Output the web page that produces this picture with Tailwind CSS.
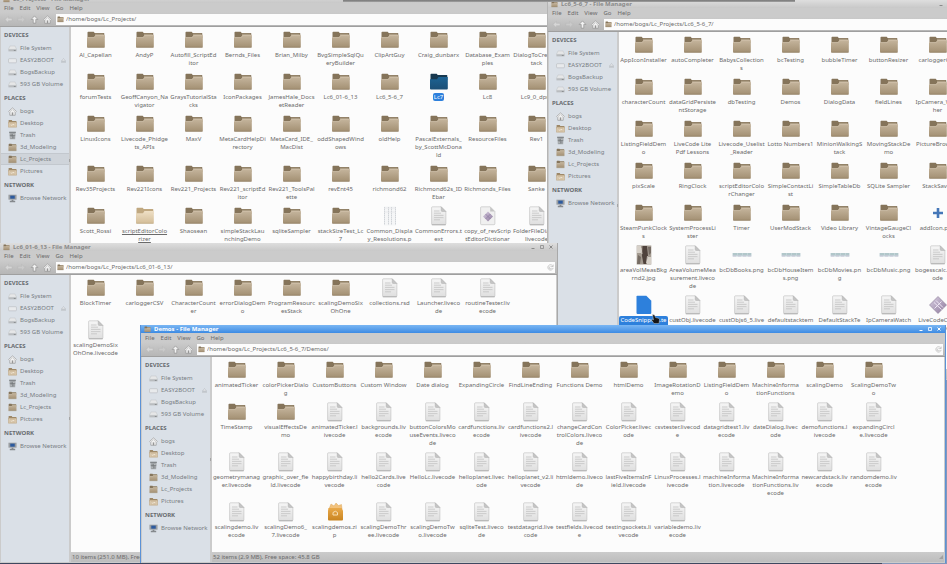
<!DOCTYPE html>
<html lang="en">
<head>
  <title>File Manager</title>
  <meta charset="UTF-8">
  <script src="https://cdn.jsdelivr.net/npm/@tailwindcss/browser@4"></script>
</head>
<body class="relative h-screen overflow-hidden bg-[#8496b8] font-['Noto_Sans',sans-serif] text-[6px] leading-[8px] text-[#6a6a6a]">

  <!-- icons -->
  <svg class="absolute size-0">
    <defs>
      <linearGradient id="gFolder" x1="0" y1="0" x2="0" y2="1"><stop offset="0" stop-color="#c5b59d"/><stop offset="1" stop-color="#a39073"/></linearGradient>
      <linearGradient id="gOpen" x1="0" y1="0" x2="0" y2="1"><stop offset="0" stop-color="#efe0c6"/><stop offset="1" stop-color="#d3bd98"/></linearGradient>
      <linearGradient id="gBlue" x1="0" y1="0" x2="0" y2="1"><stop offset="0" stop-color="#1d6394"/><stop offset="1" stop-color="#1c4f76"/></linearGradient>
      <linearGradient id="gDoc" x1="0" y1="0" x2="0" y2="1"><stop offset="0" stop-color="#f6f6f6"/><stop offset="1" stop-color="#dfdfdf"/></linearGradient>
      <linearGradient id="gZip" x1="0" y1="0" x2="0" y2="1"><stop offset="0" stop-color="#e9a94a"/><stop offset="1" stop-color="#c98420"/></linearGradient>
      <linearGradient id="gGem" x1="0" y1="0" x2="1" y2="1"><stop offset="0" stop-color="#d9cfe2"/><stop offset="1" stop-color="#8d7a9c"/></linearGradient>
    </defs>
    <symbol id="folder" viewBox="0 0 20 20">
      <path d="M1.500 2.500q0-.8.8-.8h5.400l1 1.300h9q.6 0 .6.600V8H1.500z" fill="#85745a"/>
      <path d="M9 3.600h8.600V5H9z" fill="#a8987f"/>
      <path d="M1 7.200h7L9.500 5h9.300v11.500q0 .9-.9.900H1.900q-.9 0-.9-.9z" fill="url(#gFolder)"/>
      <path d="M1 7.500h7.200L9.700 5.300h9.100" fill="none" stroke="#d8cbb7" stroke-width=".5"/>
      <path d="M1.300 17.300h17.300" stroke="#89775b" stroke-width=".6"/>
    </symbol>
    <symbol id="folderopen" viewBox="0 0 20 20">
      <path d="M1.500 2.500q0-.8.8-.8h5.400l1 1.300h9q.6 0 .6.600V8H1.500z" fill="#c0a880"/>
      <path d="M1 7.200h7L9.500 5h9.300v11.500q0 .9-.9.900H1.900q-.9 0-.9-.9z" fill="url(#gOpen)"/>
      <path d="M1.300 17.300h17.300" stroke="#b59d76" stroke-width=".6"/>
    </symbol>
    <symbol id="folderblue" viewBox="0 0 20 20">
      <path d="M1.500 2.500q0-.8.8-.8h5.400l1 1.300h9q.6 0 .6.600V8H1.500z" fill="#17384f"/>
      <path d="M1 7.200h7L9.500 5h9.300v11.500q0 .9-.9.900H1.900q-.9 0-.9-.9z" fill="url(#gBlue)"/>
    </symbol>
    <symbol id="doc" viewBox="0 0 20 20">
      <path d="M3.500.8h8.700l4.700 4.700v12.300q0 .9-.9.900H3.500q-.9 0-.9-.9V1.700q0-.9.900-.9z" fill="url(#gDoc)" stroke="#bdbdbd" stroke-width=".6"/>
      <path d="M2.800 18.800h14" stroke="#a2a2a2" stroke-width=".7"/>
      <path d="M12.200.8v3.800q0 .9.900.9h3.800z" fill="#c4c4c4" stroke="#a6a6a6" stroke-width=".4"/>
      <path d="M5 5h5.500M5 7.200h7M5 9.400h9.500M5 11.600h9.500M5 13.800h6" stroke="#c3c3c3" stroke-width=".8"/>
    </symbol>
    <symbol id="docblue" viewBox="0 0 20 20">
      <path d="M3.300.7h9l5 5v12.400q0 .8-.8.8H3.300q-.8 0-.8-.8V1.500q0-.8.8-.8z" fill="#2d80dc"/>
    </symbol>
    <symbol id="docgem" viewBox="0 0 20 20">
      <path d="M3.500.8h8.700l4.700 4.700v12.300q0 .9-.9.900H3.500q-.9 0-.9-.9V1.700q0-.9.900-.9z" fill="#f0f0f0" stroke="#bdbdbd" stroke-width=".6"/>
      <path d="M12.200.8v4.700h4.700z" fill="#c4c4c4"/>
      <path d="M10 5.500l5 5-5 5-5-5z" fill="url(#gGem)"/>
      <path d="M7.500 8l5 5M12.500 8l-5 5" stroke="#8d78a2" stroke-width=".7"/>
    </symbol>
    <symbol id="gem" viewBox="0 0 20 20">
      <path d="M10 1.500l8.500 8.500-8.500 8.500L1.500 10z" fill="url(#gGem)" stroke="#8b7a96" stroke-width=".6"/>
      <path d="M6 7.500l7.500 7M8 5.500l7 7M13.500 6.500l-7 7" stroke="#efe6f5" stroke-width="1"/>
    </symbol>
    <symbol id="sheet" viewBox="0 0 20 20">
      <path d="M4 .5h12v19H4z" fill="#f5f6f7"/>
      <path d="M4.500 1v18M8.500 1v18M11.500 1v18M15.500 1v18" stroke="#d0d4d8" stroke-width="1" stroke-dasharray="1.500 .5"/>
      <path d="M4 2h12M4 6h12" stroke="#dcdfe2" stroke-width=".5"/>
    </symbol>
    <symbol id="zip" viewBox="0 0 20 20">
      <path d="M4 7l2-5 3 2 2-3 2.500 2.500 3-1L17 7z" fill="#f2c27c" stroke="#d39b4a" stroke-width=".4"/>
      <path d="M3.500 6h13l1.500 2.500v9q0 1-1 1H4q-1 0-1-1v-9z" fill="url(#gZip)"/>
      <path d="M8 10.500q2.500-2.500 4.500 0M8 10.500v2.500h4.500v-2.500" fill="none" stroke="#f7dfb5" stroke-width="1"/>
    </symbol>
    <symbol id="plus" viewBox="0 0 20 20">
      <path d="M8.700 5h2.600v3.700H15v2.600h-3.700V15H8.700v-3.700H5V8.700h3.700z" fill="#4577b8"/>
    </symbol>
    <symbol id="photo" viewBox="0 0 20 20">
      <path d="M2.700.5h14.600v19H2.700z" fill="#a39a90"/>
      <path d="M3 1h4v7H3zM13 12h4v7h-4z" fill="#d6d0c8"/>
      <path d="M8.500 1h4.500l1 10-2 8H9.500L8 11z" fill="#4f423c"/>
      <path d="M4 10l3 2-1 7H3zM14 2h3v6l-2 2z" fill="#766c64"/>
      <path d="M7 3l1 6M13.500 11l-1 7" stroke="#e9e4dd" stroke-width=".7"/>
    </symbol>
    <symbol id="banner" viewBox="0 0 20 20">
      <path d="M.5 8h19v3.500H.5z" fill="#c3d3d8"/>
      <path d="M1 9h18" stroke="#8fb3b2" stroke-width=".7" stroke-dasharray="4 1"/>
      <path d="M1 11h18" stroke="#c0bad0" stroke-width=".7" stroke-dasharray="3 2"/>
    </symbol>

    <!-- small ones for the sidebar and the toolbar -->
    <symbol id="drive" viewBox="0 0 10 10">
      <path d="M2.200 2.200h5.600L9.500 6H.5z" fill="#e6e7e8" stroke="#b4b7ba" stroke-width=".4"/>
      <path d="M.5 6h9v2.200H.5z" fill="#b9bcbf"/>
      <path d="M6.500 7.200h2" stroke="#707376" stroke-width=".7"/>
    </symbol>
    <symbol id="usb" viewBox="0 0 10 10">
      <rect x=".6" y="3" width="8.800" height="4.600" rx="1" fill="#e8eaec" stroke="#b2b6ba" stroke-width=".6"/>
    </symbol>
    <symbol id="home" viewBox="0 0 10 10">
      <path d="M2 5v4.200h6V5L5 2.500z" fill="#f0f0f0" stroke="#8e8e8e" stroke-width=".7"/>
      <path d="M.9 5.500L5 1.700l4.100 3.800" fill="none" stroke="#f3f3f3" stroke-width="1.200"/>
      <path d="M.4 5.200L5 1l4.600 4.200" fill="none" stroke="#8e8e8e" stroke-width=".7"/>
      <path d="M4.200 6h1.600v3.200H4.200z" fill="#959595"/>
    </symbol>
    <symbol id="desk" viewBox="0 0 10 10">
      <path d="M.7 1.200h3.500l.6.900h4.500V5H.7z" fill="#9c8767"/>
      <path d="M.5 3.500h9v5.600h-9z" fill="#dccbb0" stroke="#b39a74" stroke-width=".5"/>
      <path d="M2.500 5h5v3h-5zM3.500 6l3 1.500" fill="#eee3d0" stroke="#b9a27e" stroke-width=".5"/>
    </symbol>
    <symbol id="trash" viewBox="0 0 10 10">
      <path d="M1.500 1.500h7L8 9.300H2z" fill="#a9adb0"/>
      <path d="M1.300.8h7.400v1.300H1.300z" fill="#7c8083"/>
      <path d="M3.500 3v5.500M5 3v5.500M6.500 3v5.500M2 5h6" stroke="#63676a" stroke-width=".5"/>
      <path d="M3 7h1M6 4h1" stroke="#e9ebec" stroke-width=".8"/>
    </symbol>
    <symbol id="net" viewBox="0 0 10 10">
      <path d="M.5.800h9v5.500h-9z" fill="#999da1"/>
      <path d="M2.500 1.800h5v3.400h-5z" fill="#2c5a9e"/>
      <path d="M4 6.300h2v1.200H4zM2 7.500h6v1.700H2z" fill="#85898d"/>
    </symbol>
    <symbol id="back" viewBox="0 0 10 10">
      <path d="M1 5l4-3.500v2.200h4v2.600H5v2.200z" fill="#d6d6d6" stroke="#b3b3b3" stroke-width=".5"/>
    </symbol>
    <symbol id="forward" viewBox="0 0 10 10">
      <path d="M9 5L5 1.500v2.200H1v2.600h4v2.200z" fill="#cacaca" stroke="#b8b8b8" stroke-width=".5"/>
    </symbol>
    <symbol id="up" viewBox="0 0 10 10">
      <path d="M5 1L1.300 5h2.300v4h2.800V5h2.300z" fill="#f2f2f2" stroke="#8e8e8e" stroke-width=".7"/>
    </symbol>
    <symbol id="reload" viewBox="0 0 10 10">
      <path d="M8 2.500A3.800 3.800 0 1 0 8.800 5.500M8.800.8v2.800H6M6.500 5.500A1.600 1.600 0 1 1 5 3.700" fill="none" stroke="#a3a3a3" stroke-width=".8"/>
    </symbol>
  </svg>

  <!-- Lc_Projects -->
  <section class="absolute -top-[5px] left-0 flex h-[300px] w-[564px] flex-col bg-[#cbcbcb]" data-window="projects"></section>

  <!-- Lc6_5-6_7 -->
  <section class="absolute top-0 -right-[18px] left-[547px] flex h-[380px] flex-col border-l border-[#b5b5b5] bg-[#cbcbcb]" data-window="lc65"></section>

  <!-- edge of the window above -->
  <div class="absolute top-0 left-[343px] h-[2px] w-[452px] bg-linear-to-b from-[#777777] to-[#a2a2a2]"></div>

  <!-- Lc6_01-6_13 -->
  <section class="absolute top-[243px] bottom-px left-0 flex w-[558px] flex-col border-r border-[#a9a9a9] bg-[#cbcbcb]" data-window="lc601"></section>

  <!-- Demos -->
  <section class="absolute top-[325px] right-px bottom-px left-[140px] flex flex-col border-x border-[#5c92d6] bg-[#cbcbcb]" data-window="demos"></section>

  <!-- panel edge -->
  <div class="absolute right-[65px] bottom-0 left-0 h-px bg-[#3e4860]"></div>

  <!-- pointer -->
  <svg class="absolute top-[314px] left-[651px] h-[10px] w-[9px]" viewBox="0 0 9 10">
    <path d="M1.500.5l2 .5 1 2.500 3 .8 1 1.200-.5 4H3L.5 6l1-.8 1 .6z" fill="#161616" stroke="#cfd8e4" stroke-width=".4"/>
  </svg>

<script>
  const windows = {
    projects: {
      title: "Lc_Projects - File Manager",
      path: "/home/bogs/Lc_Projects/",
      current: "Lc_Projects",
      cols: "grid-cols-[repeat(10,49px)]",
      status: "",
      files: `Al_Capellan, AndyP, Autofill_ScriptEd|itor, Bernds_Files, Brian_Milby, BvgSimpleSqlQu|eryBuilder, ClipArtGuy, Craig_dunbarx, Database_Exam|ples, DialogToCreateS|tack,
        forumTests, GeoffCanyon_Na|vigator, GraysTutorialSta|cks, IconPackages, JamesHale_Docs|etReader, Lc6_01-6_13, Lc6_5-6_7, Lc7:folderblue, Lc8, Lc9_0_dpr1,
        LinuxIcons, Livecode_Phidge|ts_APIs, MaxV, MetaCardHelpDi|rectory, MetaCard_IDE_|MacDist, oddShapedWind|ows, oldHelp, PascalExternals_|by_ScottMcDona|ld, ResourceFiles, Rev1,
        Rev35Projects, Rev221Icons, Rev221_Projects, Rev221_scriptEd|itor, Rev221_ToolsPal|ette, revEnt45, richmond62, Richmond62s_ID|Ebar, Richmonds_Files, Sanke,
        Scott_Rossi, scriptEditorColo|rizer:folderopen, Shaosean, simpleStackLau|nchingDemo, sqliteSampler, stackSizeTest_Lc|7, Common_Displa|y_Resolutions.p:sheet, CommonErrors.t|ext:doc, copy_of_revScrip|tEditorDictionar:docgem, FolderFileDialog.|livecode:doc`
    },
    lc65: {
      title: "Lc6_5-6_7 - File Manager",
      path: "/home/bogs/Lc_Projects/Lc6_5-6_7/",
      cols: "grid-cols-[repeat(7,49px)]",
      status: "",
      files: `AppIconInstaller, autoCompleter, BabysCollection|s, bcTesting, bubbleTimer, buttonResizer, carloggerCSV,
        characterCount, dataGridPersiste|ntStorage, dbTesting, Demos, DialogData, fieldLines, IpCamera_Watc|her,
        ListingFieldDem|o, LiveCode Lite|Pdf Lessons, Livecode_Uselist|_Reader, Lotto Numbers1, MinionWalkingS|tack, MovingStackDe|mo, PictureBrowser,
        pixScale, RingClock, scriptEditorColo|rChanger, SimpleContactLi|st, SimpleTableDb, SQLite Sampler, StackSaver,
        SteamPunkClock|s, SystemProcessLi|ster, Timer, UserModStack, Video Library, VintageGaugeCl|ocks, addIcon.png:plus,
        areaVolMeasBkg|rnd2.jpg:photo, AreaVolumeMea|surement.liveco|de:doc, bcDbBooks.png:banner, bcDbHouseItem|s.png:banner, bcDbMovies.pn|g:banner, bcDbMusic.png:banner, bogesscalc.livec|ode:doc,
        CodeSnippets.te|xt:docblue, custObj.livecode:doc, custObjs6_5.live|code:doc, defaultstacktem|plate.livecode:doc, DefaultStackTe|mplate.livecode:doc, IpCameraWatch|er.livecode:doc, LiveCodeCom|mands.livecode:gem`
    },
    lc601: {
      title: "Lc6_01-6_13 - File Manager",
      path: "/home/bogs/Lc_Projects/Lc6_01-6_13/",
      cols: "grid-cols-[repeat(9,49px)]",
      status: "10 items (251.0 MB), Free space: 45.8 GB",
      files: `BlockTimer, carloggerCSV, CharacterCount|er, errorDialogDem|o, ProgramResourc|esStack, scalingDemoSix|OhOne, collections.rsd:doc, Launcher.liveco|de:doc, routineTester.liv|ecode:doc,
        scalingDemoSix|OhOne.livecode:doc`
    },
    demos: {
      title: "Demos - File Manager",
      path: "/home/bogs/Lc_Projects/Lc6_5-6_7/Demos/",
      active: true,
      cols: "grid-cols-[repeat(14,49px)]",
      status: "52 items (2.9 MB), Free space: 45.8 GB",
      files: `animatedTicker, colorPickerDialo|g, CustomButtons, Custom Window, Date dialog, ExpandingCircle, FindLineEnding, Functions Demo, htmlDemo, ImageRotationD|emo, ListingFieldDem|o, MachineInforma|tionFunctions, scalingDemo, ScalingDemoTw|o,
        TimeStamp, visualEffectsDe|mo, animatedTicker.l|ivecode:doc, backgrounds.liv|ecode:doc, buttonColorsMo|useEvents.liveco|de:doc, cardfunctions.liv|ecode:doc, cardfunctions2.l|ivecode:doc, changeCardCon|trolColors.liveco|de:doc, ColorPicker.livec|ode:doc, csvtester.livecod|e:doc, datagridtest1.liv|ecode:doc, dateDialog.livec|ode:doc, demofunctions.l|ivecode:doc, expandingCircl|e.livecode:doc,
        geometrymanag|er.livecode:doc, graphic_over_fie|ld.livecode:doc, happybirthday.li|vecode:doc, hello2Cards.live|code:doc, HelloLc.livecode:doc, helloplanet.livec|ode:doc, helloplanet_v2.li|vecode:doc, htmldemo.liveco|de:doc, lastFiveItemsInF|ield.livecode:doc, LinuxProcesses.l|ivecode:doc, machineInforma|tion.livecode:doc, MachineInforma|tionFunctions.liv|ecode:doc, newcardstack.liv|ecode:doc, randomdemo.liv|ecode:doc,
        scalingdemo.liv|ecode:doc, scalingDemo6_|7.livecode:doc, scalingdemos.zi|p:zip, scalingDemoThr|ee.livecode:doc, scalingDemoTw|o.livecode:doc, sqliteTest.liveco|de:doc, testdatagrid.live|code:doc, testfields.livecod|e:doc, testingsockets.li|vecode:doc, variabledemo.liv|ecode:doc`
    }
  }

  const places = [
    ["DEVICES", [["File System", "drive"], ["EASY2BOOT", "usb"], ["BogsBackup", "drive"], ["593 GB Volume", "drive"]]],
    ["PLACES", [["bogs", "home"], ["Desktop", "desk"], ["Trash", "trash"], ["3d_Modeling", "folder"], ["Lc_Projects", "folder"], ["Pictures", "desk"]]],
    ["NETWORK", [["Browse Network", "net"]]]
  ]

  function sidebar(current) {
    return places.map(([head, items]) => `
      <h2 class="h-[15px] px-[3px] pt-1 font-bold text-[#696c70]">${head}</h2>
      <ul>${items.map(([name, icon]) => `
        <li><a href="#" class="flex h-3 items-center gap-[3px] pl-[7px] ${name === current ? "border-y border-[#c3c8ce] bg-[#cfd4da]" : ""}">
          <svg class="size-[9px] shrink-0"><use href="#${icon}"/></svg>
          <span class="grow whitespace-nowrap text-[#777c82]">${name}</span>
          ${name === "EASY2BOOT" ? '<svg class="mr-[3px] size-[5px]" viewBox="0 0 5 5"><path d="M2.500.5L4.500 3h-4zM.5 3.500h4v1h-4z" fill="#e8eaed" stroke="#a4a8ad" stroke-width=".4"/></svg>' : ""}
        </a></li>`).join("")}
      </ul>`).join("")
  }

  function file(entry) {
    const [name, icon = "folder"] = entry.trim().split(":")
    const picked = icon === "docblue" || icon === "folderblue"
    return `<li class="flex flex-col items-center gap-px">
      <svg class="size-5 shrink-0"><use href="#${icon}"/></svg>
      <span class="whitespace-nowrap text-center ${picked ? "rounded-xs bg-[#2d80dc] px-px text-white" : ""} ${icon === "folderopen" ? "underline" : ""}">${name.replaceAll("|", "<br>")}</span>
    </li>`
  }

  function render(w) {
    return `
      <header class="flex h-2 shrink-0 items-center gap-[3px] pr-[3px] pl-[3px] ${w.active ? "bg-linear-to-b from-[#7ab6f3] to-[#3c8be3] text-white" : "bg-linear-to-b from-[#dedede] to-[#c8c8c8] text-[#8a8a8a]"}">
        <svg class="size-[7px]"><use href="#folder"/></svg>
        <h1 class="grow whitespace-nowrap font-bold">${w.title}</h1>
        <div class="flex gap-[3px]">
          <button aria-label="Minimize" class="flex size-[6px]"><svg viewBox="0 0 6 6"><path d="M1.500 4.500h3" stroke="currentColor"/></svg></button>
          <button aria-label="Maximize" class="flex size-[6px]"><svg viewBox="0 0 6 6"><path d="M1.500 1.500h3v3h-3z" fill="none" stroke="currentColor" stroke-width=".8"/></svg></button>
          <button aria-label="Close" class="flex size-[6px]"><svg viewBox="0 0 6 6"><path d="M1.500 1.500l3 3M4.500 1.500l-3 3" stroke="currentColor"/></svg></button>
        </div>
      </header>
      <nav class="flex h-[9px] shrink-0 items-center gap-[6px] pl-1">
        <button>File</button><button>Edit</button><button>View</button><button>Go</button><button>Help</button>
      </nav>
      <div class="flex h-[15px] shrink-0 items-center gap-1 border-b border-[#9f9f9f] bg-linear-to-b from-[#cbcbcb] to-[#b6b6b6] pr-[2px] pl-1">
        <button aria-label="Back"><svg class="size-[9px]"><use href="#back"/></svg></button>
        <button aria-label="Forward"><svg class="size-[9px]"><use href="#forward"/></svg></button>
        <button aria-label="Up"><svg class="size-[9px]"><use href="#up"/></svg></button>
        <button aria-label="Home"><svg class="size-[9px]"><use href="#home"/></svg></button>
        <div class="flex h-[11px] grow items-center gap-[2px] bg-[#fcfcfc] px-px">
          <svg class="size-[7px] shrink-0"><use href="#folder"/></svg>
          <input aria-label="Location" value="${w.path}" class="h-[9px] min-w-0 grow outline-none">
          <button aria-label="Reload"><svg class="size-[7px]"><use href="#reload"/></svg></button>
        </div>
      </div>
      <div class="flex min-h-0 grow pr-px pb-px pl-px">
        <aside class="w-[68px] shrink-0 bg-[#dae0e7]">${sidebar(w.current)}</aside>
        <div class="flex w-[2px] shrink-0 items-center bg-[#cbcbcb]"><i class="h-[3px] w-px bg-[#a5a5a5]"></i></div>
        <main class="flex min-w-0 grow flex-col">
          <ul class="grid min-h-0 grow content-start gap-y-[5px] overflow-hidden bg-[#fcfcfc] pt-[3px] auto-rows-[minmax(37px,auto)] ${w.cols}">${w.files.split(",").map(file).join("")}</ul>
          <footer class="flex h-[10px] shrink-0 items-center justify-between bg-linear-to-b from-[#cbcbcb] to-[#bdbdbd] pl-px">
            <span class="whitespace-nowrap">${w.status}</span>
            <svg class="size-[5px]" viewBox="0 0 5 5"><path d="M4 0v4H0z" fill="#a0a0a0"/></svg>
          </footer>
        </main>
      </div>`
  }

  document.querySelectorAll("[data-window]").forEach((el) => {
    el.innerHTML = render(windows[el.dataset.window])
  })
</script>
</body>
</html>
